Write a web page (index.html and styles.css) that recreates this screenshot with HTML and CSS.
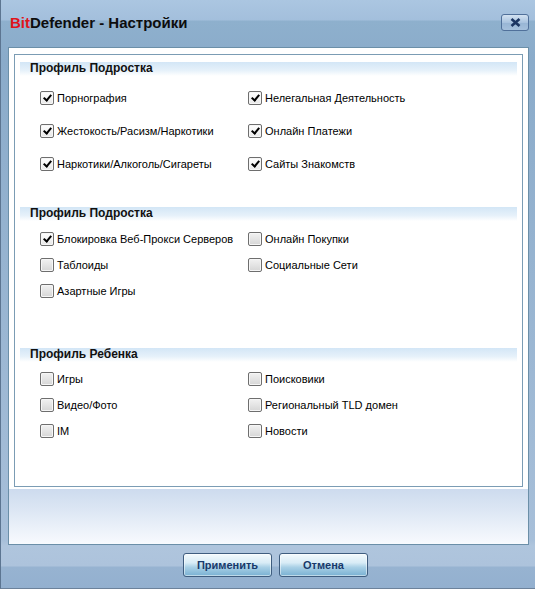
FILE: index.html
```html
<!DOCTYPE html>
<html lang="ru">
<head>
    <meta charset="UTF-8">
    <title>BitDefender - Настройки</title>
    <link rel="stylesheet" href="styles.css">
</head>
<body>
    <div class="window">
        <div class="titlebar">
            <div class="title"><span class="brand">Bit</span>Defender - Настройки</div>
            <button class="close-btn" title="Закрыть">
                <svg width="11" height="9" viewBox="0 0 11 9"><path d="M1.5 1 L9.5 8 M9.5 1 L1.5 8" stroke="#1b3562" stroke-width="2.6" fill="none"/></svg>
            </button>
        </div>

        <div class="panel">
            <div class="content">
                <div class="section">
                    <div class="section-head">Профиль Подростка</div>
                    <div class="rows rows-loose">
                        <label class="opt checked"><span class="box"></span>Порнография</label>
                        <label class="opt checked"><span class="box"></span>Нелегальная Деятельность</label>
                        <label class="opt checked"><span class="box"></span>Жестокость/Расизм/Наркотики</label>
                        <label class="opt checked"><span class="box"></span>Онлайн Платежи</label>
                        <label class="opt checked"><span class="box"></span>Наркотики/Алкоголь/Сигареты</label>
                        <label class="opt checked"><span class="box"></span>Сайты Знакомств</label>
                    </div>
                </div>

                <div class="section section-2">
                    <div class="section-head">Профиль Подростка</div>
                    <div class="rows">
                        <label class="opt checked"><span class="box"></span>Блокировка Веб-Прокси Серверов</label>
                        <label class="opt"><span class="box"></span>Онлайн Покупки</label>
                        <label class="opt"><span class="box"></span>Таблоиды</label>
                        <label class="opt"><span class="box"></span>Социальные Сети</label>
                        <label class="opt"><span class="box"></span>Азартные Игры</label>
                    </div>
                </div>

                <div class="section section-3">
                    <div class="section-head">Профиль Ребенка</div>
                    <div class="rows">
                        <label class="opt"><span class="box"></span>Игры</label>
                        <label class="opt"><span class="box"></span>Поисковики</label>
                        <label class="opt"><span class="box"></span>Видео/Фото</label>
                        <label class="opt"><span class="box"></span>Региональный TLD домен</label>
                        <label class="opt"><span class="box"></span>IM</label>
                        <label class="opt"><span class="box"></span>Новости</label>
                    </div>
                </div>
            </div>
            <div class="lower"></div>
        </div>

        <div class="footer">
            <button class="btn">Применить</button>
            <button class="btn">Отмена</button>
        </div>
    </div>
</body>
</html>
```

FILE: styles.css
```css
body {
    margin: 0;
    background-color: #8eafcd;
    font-family: Tahoma, "Liberation Sans", Arial, sans-serif;
}

.window {
    width: 535px;
    height: 589px;
    box-sizing: border-box;
    border-left: 1px solid #5c7591;
    border-bottom: 1px solid #6c829b;
    background: linear-gradient(to bottom,
        #abc6e1 0, #a3bfdc 20px, #8eb0cd 21px, #8aabca 60px,
        #a7bfd9 540px, #afc5dd 546px, #adc3dc 566px, #97b3d1 567px, #93b0cf 589px);
    display: flex;
    flex-direction: column;
}

.titlebar {
    height: 47px;
    display: flex;
    align-items: flex-start;
    justify-content: space-between;
    padding: 0 6px 0 9px;
}

.title {
    margin-top: 14px;
    font-family: "Liberation Sans", Arial, sans-serif;
    font-size: 15px;
    font-weight: bold;
    color: #0d0d0d;
}

.brand {
    color: #e0141b;
}

.close-btn {
    margin-top: 14px;
    width: 28px;
    height: 17px;
    padding: 0;
    border: 1px solid #50709a;
    border-radius: 3px;
    background: linear-gradient(to bottom, #d3e2f1, #a9c3df 50%, #97b5d4 51%, #a5c0dc);
    display: flex;
    align-items: center;
    justify-content: center;
}

.panel {
    height: 498px;
    margin: 0 6px 0 7px;
    box-sizing: border-box;
    border: 1px solid #6b8fa8;
    background-color: #ffffff;
    display: flex;
    flex-direction: column;
}

.content {
    height: 433px;
    margin: 6px 5px 0 5px;
    box-sizing: border-box;
    border: 1px solid #7b9cb4;
    background-color: #ffffff;
}

.lower {
    flex: 1;
    margin-top: 2px;
    background: linear-gradient(to bottom, #cddbee, #dde7f4 40%, #f8fafe);
}

.section {
    padding-top: 7px;
}

.section-2 {
    padding-top: 27px;
}

.section-3 {
    padding-top: 44px;
}

.section-head {
    margin: 0 5px;
    height: 14px;
    padding-left: 10px;
    font-size: 12px;
    font-weight: bold;
    line-height: 13px;
    color: #111111;
    background: linear-gradient(to bottom, #d3e6f6, #e6f1fa 60%, #ffffff);
}

.rows {
    display: grid;
    grid-template-columns: 208px 1fr;
    grid-auto-rows: 26px;
    padding-left: 25px;
    margin-top: 5px;
}

.rows-loose {
    grid-auto-rows: 33px;
    margin-top: 5px;
}

.section-3 .rows {
    margin-top: 4px;
}

.opt {
    display: flex;
    align-items: center;
    font-size: 11px;
    color: #000000;
    white-space: nowrap;
}

.box {
    width: 12px;
    height: 12px;
    margin-right: 3px;
    border: 1px solid #6e6e6e;
    border-radius: 2px;
    background: linear-gradient(to bottom, #f2f2f2, #d6d6d6);
    box-shadow: inset 0 0 0 1px #f6f6f6;
    display: flex;
    align-items: center;
    justify-content: center;
}

.checked .box {
    background: linear-gradient(to bottom, #ffffff, #e8e8e8);
}

.checked .box::before {
    content: "";
    width: 3px;
    height: 6px;
    margin-top: -2px;
    border: solid #000000;
    border-width: 0 2.5px 2.5px 0;
    transform: rotate(40deg);
}

.footer {
    flex: 1;
    display: flex;
    justify-content: center;
    gap: 7px;
    padding: 8px 0 0 15px;
    align-items: flex-start;
}

.btn {
    width: 89px;
    height: 24px;
    padding: 0;
    border: 1px solid #3f5d7f;
    border-radius: 3px;
    background: linear-gradient(to bottom, #f4fafd, #d8ecf6 40%, #a9d0e6 60%, #78b0d2);
    box-shadow: inset 0 0 0 1px rgba(255, 255, 255, 0.5);
    font-family: Tahoma, "Liberation Sans", Arial, sans-serif;
    font-size: 11px;
    font-weight: bold;
    color: #183a6b;
    cursor: pointer;
}
```
